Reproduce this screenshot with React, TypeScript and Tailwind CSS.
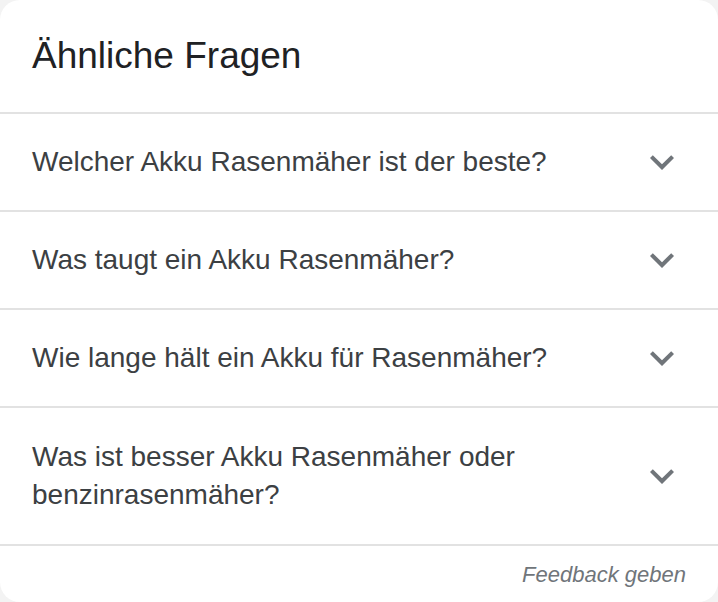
const questions = [
  "Welcher Akku Rasenmäher ist der beste?",
  "Was taugt ein Akku Rasenmäher?",
  "Wie lange hält ein Akku für Rasenmäher?",
  "Was ist besser Akku Rasenmäher oder benzinrasenmäher?",
];

function Chevron() {
  return (
    <svg width="48" height="48" viewBox="0 0 24 24" className="shrink-0 fill-[#70757a]">
      <path d="M16.59 8.59L12 13.17 7.41 8.59 6 10l6 6 6-6z" />
    </svg>
  );
}

export default function App() {
  return (
    <div className="min-h-screen bg-[#f3f3f3]" style={{ fontFamily: '"Liberation Sans", Arial, sans-serif' }}>
      <div className="w-[718px] h-[602px] rounded-[20px] bg-white overflow-hidden flex flex-col">
        <div className="h-[112px] px-8 flex items-center">
          <h2 className="text-[37px] leading-[44px] text-[#202124]">Ähnliche Fragen</h2>
        </div>
        {questions.map((q, i) => (
          <div
            key={q}
            className={
              "border-t-2 border-[#e2e2e2] pl-8 pr-8 flex items-center justify-between gap-4 " +
              (i === questions.length - 1 ? "h-[138px]" : "h-[98px]")
            }
          >
            <span className="text-[28px] leading-[38px] text-[#3c4043]">{q}</span>
            <Chevron />
          </div>
        ))}
        <div className="border-t-2 border-[#e2e2e2] flex-1 flex items-center justify-end pr-8">
          <span className="italic text-[22px] text-[#70757a]">Feedback geben</span>
        </div>
      </div>
    </div>
  );
}
